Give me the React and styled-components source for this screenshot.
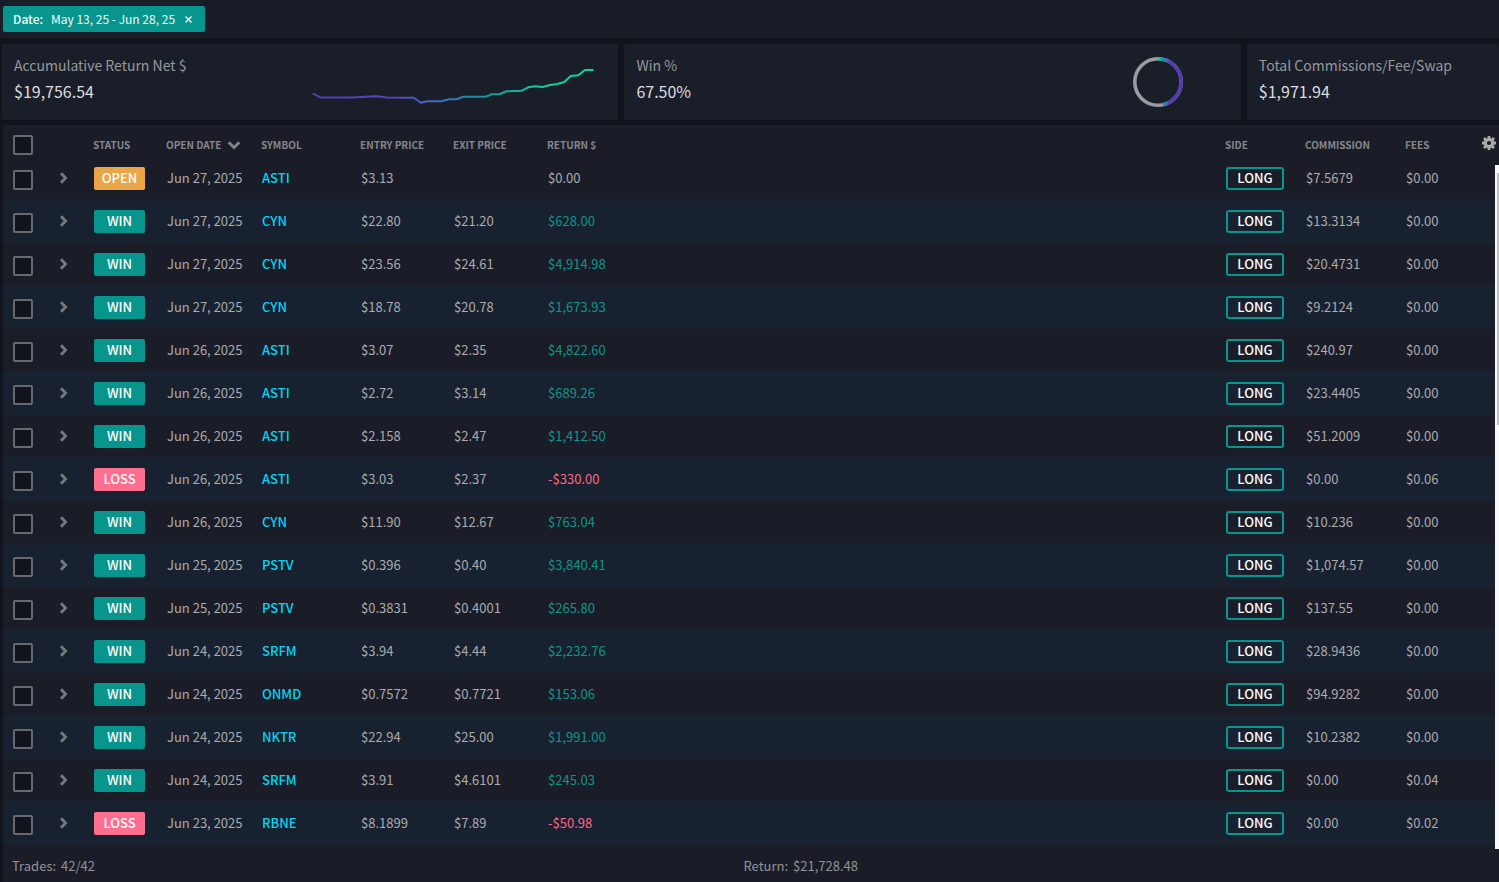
import React from "react";
import styled, { createGlobalStyle } from "styled-components";

const GlobalStyle = createGlobalStyle`
  *, *::before, *::after { box-sizing: border-box; }
  body {
    margin: 0;
    background: #11141c;
    color: #a3a4a7;
    font-family: "Noto Sans CJK SC", "Noto Sans", sans-serif;
    font-size: 13px;
    line-height: 20px;
  }
  button { font: inherit; color: inherit; background: none; border: 0; padding: 0; cursor: pointer; }
  a { text-decoration: none; }
`;

const Page = styled.div`
  display: flex;
  flex-direction: column;
  min-height: 100vh;
`;

const FilterBar = styled.div`
  display: flex;
  padding: 6px 3px;
  background: #1a1d28;
`;

const FilterChip = styled.button`
  && {
    display: flex;
    align-items: center;
    height: 26px;
    padding: 0 13px 0 10px;
    border-radius: 2px;
    background: #07958d;
    color: #f4fbfb;
    font-size: 12px;
  }
`;

const ChipLabel = styled.span`
  margin-right: 8px;
  font-weight: 500;
`;

const CloseIcon = styled.svg`
  width: 7px;
  height: 7px;
  margin-left: 10px;
`;

const Stats = styled.section`
  display: grid;
  grid-template-columns: 22fr 22fr 9fr;
  gap: 6px;
  padding: 6px 0 5px 2px;
`;

const StatCard = styled.article`
  display: flex;
  justify-content: space-between;
  min-width: 0;
  height: 76px;
  padding: 12px;
  border-radius: 2px;
  background: #1a1e29;
  overflow: hidden;
`;

const StatTitle = styled.h2`
  margin: 0 0 7px;
  font-size: 14px;
  font-weight: 400;
  line-height: 18px;
  color: #97989c;
  white-space: nowrap;
`;

const StatValue = styled.div`
  font-size: 16px;
  line-height: 20px;
  color: #dcdddf;
`;

const Spark = styled.svg`
  width: 284px;
  height: 52px;
  margin-right: 11px;
`;

const Donut = styled.svg`
  width: 52px;
  height: 52px;
  margin-right: 45px;
`;

const Panel = styled.main`
  flex: 1;
  display: flex;
  flex-direction: column;
  margin-left: 3px;
  background: #1a1d28;
`;

const TableArea = styled.div`
  display: flex;
`;

const Table = styled.table`
  flex: 1;
  width: 0;
  margin-bottom: 4px;
  table-layout: fixed;
  border-collapse: separate;
  border-spacing: 0;
`;

const Col = styled.col`
  width: ${(p) => p.$w}px;
`;

const Th = styled.th`
  height: 32px;
  padding: 10px 0 0 ${(p) => (p.$check ? 10 : 9)}px;
  font-size: 10px;
  font-weight: 700;
  line-height: 20px;
  text-align: left;
  vertical-align: top;
  white-space: nowrap;
  color: #85878c;
`;

const Tr = styled.tr`
  background: ${(p) => (p.$alt ? "#18212f" : "#1a1d28")};
`;

const Td = styled.td`
  height: 43px;
  padding: 10px 0 0 10px;
  border-bottom: 1px solid #1a2230;
  line-height: 22px;
  vertical-align: top;
  white-space: nowrap;
  color: ${(p) => p.$tone || "#aaabad"};
`;

const Check = styled.input.attrs({ type: "checkbox" })`
  appearance: none;
  display: block;
  width: 20px;
  height: 20px;
  margin: ${(p) => (p.$row ? "3px 0 0" : "0")};
  border: 2px solid #67696e;
  border-radius: 2px;
  background: #11141c;
`;

const SortButton = styled.button`
  && {
    display: flex;
    align-items: center;
    gap: 6px;
    font-weight: 700;
  }
`;

const IconButton = styled.button`
  && {
    display: flex;
    align-items: center;
    height: ${(p) => (p.$row ? 22 : 16)}px;
  }
`;

const Status = styled.span`
  display: block;
  width: 51px;
  height: 23px;
  border-radius: 2px;
  background: ${(p) => ({ OPEN: "#eaa646", WIN: "#07958d", LOSS: "#fd6f8f" })[p.$kind]};
  color: #ffffff;
  font-weight: 500;
  line-height: 22px;
  text-align: center;
`;

const Side = styled.span`
  display: block;
  width: 58px;
  height: 23px;
  border: 2px solid #07958d;
  border-radius: 3px;
  color: #ffffff;
  font-weight: 500;
  line-height: 18px;
  text-align: center;
`;

const SymbolLink = styled.a`
  color: #06d3ef;
  font-weight: 500;
`;

const ScrollTrack = styled.div`
  width: 4px;
  margin-top: 40px;
  padding: 8px 0 0 2px;
  background: #fafafa;
`;

const ScrollThumb = styled.div`
  height: 252px;
  background: #c1c1c1;
`;

const Footer = styled.footer`
  display: grid;
  grid-template-columns: 1fr 1fr;
  padding: 7px 24px 6px 9px;
  color: #929397;
`;

const Total = styled.span`
  display: flex;
  gap: 5px;
`;

const trades = [
  ["OPEN", "Jun 27, 2025", "ASTI", "$3.13", "", "$0.00", "$7.5679", "$0.00"],
  ["WIN", "Jun 27, 2025", "CYN", "$22.80", "$21.20", "$628.00", "$13.3134", "$0.00"],
  ["WIN", "Jun 27, 2025", "CYN", "$23.56", "$24.61", "$4,914.98", "$20.4731", "$0.00"],
  ["WIN", "Jun 27, 2025", "CYN", "$18.78", "$20.78", "$1,673.93", "$9.2124", "$0.00"],
  ["WIN", "Jun 26, 2025", "ASTI", "$3.07", "$2.35", "$4,822.60", "$240.97", "$0.00"],
  ["WIN", "Jun 26, 2025", "ASTI", "$2.72", "$3.14", "$689.26", "$23.4405", "$0.00"],
  ["WIN", "Jun 26, 2025", "ASTI", "$2.158", "$2.47", "$1,412.50", "$51.2009", "$0.00"],
  ["LOSS", "Jun 26, 2025", "ASTI", "$3.03", "$2.37", "-$330.00", "$0.00", "$0.06"],
  ["WIN", "Jun 26, 2025", "CYN", "$11.90", "$12.67", "$763.04", "$10.236", "$0.00"],
  ["WIN", "Jun 25, 2025", "PSTV", "$0.396", "$0.40", "$3,840.41", "$1,074.57", "$0.00"],
  ["WIN", "Jun 25, 2025", "PSTV", "$0.3831", "$0.4001", "$265.80", "$137.55", "$0.00"],
  ["WIN", "Jun 24, 2025", "SRFM", "$3.94", "$4.44", "$2,232.76", "$28.9436", "$0.00"],
  ["WIN", "Jun 24, 2025", "ONMD", "$0.7572", "$0.7721", "$153.06", "$94.9282", "$0.00"],
  ["WIN", "Jun 24, 2025", "NKTR", "$22.94", "$25.00", "$1,991.00", "$10.2382", "$0.00"],
  ["WIN", "Jun 24, 2025", "SRFM", "$3.91", "$4.6101", "$245.03", "$0.00", "$0.04"],
  ["LOSS", "Jun 23, 2025", "RBNE", "$8.1899", "$7.89", "-$50.98", "$0.00", "$0.02"],
];

const returnTone = { OPEN: "#aaabad", WIN: "#109488", LOSS: "#fb6787" };
const columns = [46, 35, 73, 95, 99, 93, 94, null, 80, 100, 77, 22];

const Chevron = ({ down }) => (
  <svg width={down ? 14 : 10} height={down ? 16 : 14} viewBox={down ? "0 0 14 16" : "0 0 10 14"} fill="none" stroke={down ? "#808287" : "#77797d"} strokeWidth="2.8">
    <path d={down ? "M1.6 5.2 7 10.6l5.4-5.4" : "M2 2.2 6.6 7 2 11.8"} />
  </svg>
);

const Gear = () => (
  <svg width="14" height="16" viewBox="0 0 16 16" fill="none" stroke="#a9aaac">
    <circle cx="8" cy="8" r="4.2" strokeWidth="3.6" />
    <path strokeWidth="3.2" d="M8 0v3M8 13v3M0 8h3M13 8h3M2.3 2.3l2.2 2.2M11.5 11.5l2.2 2.2M2.3 13.7l2.2-2.2M11.5 4.5l2.2-2.2" />
  </svg>
);

export default function App() {
  return (
    <Page>
      <GlobalStyle />
      <FilterBar>
        <FilterChip type="button">
          <ChipLabel>Date:</ChipLabel>
          May 13, 25 - Jun 28, 25
          <CloseIcon viewBox="0 0 7 7" stroke="currentColor" strokeWidth="1.4">
            <path d="M.5.5l6 6M6.5.5l-6 6" />
          </CloseIcon>
        </FilterChip>
      </FilterBar>

      <Stats>
        <StatCard>
          <div>
            <StatTitle>Accumulative Return Net $</StatTitle>
            <StatValue>$19,756.54</StatValue>
          </div>
          <Spark viewBox="0 0 284 52" fill="none" strokeWidth="2" strokeLinejoin="round">
            <defs>
              <linearGradient id="spark" gradientUnits="userSpaceOnUse" x1="0" y1="0" x2="284" y2="0">
                <stop offset="0" stopColor="#553ab4" />
                <stop offset=".3" stopColor="#5a43c4" />
                <stop offset=".42" stopColor="#4a63c8" />
                <stop offset=".6" stopColor="#158f9f" />
                <stop offset=".78" stopColor="#0dcb9c" />
                <stop offset="1" stopColor="#0bd998" />
              </linearGradient>
            </defs>
            <path
              stroke="url(#spark)"
              d="M1.7 37.3 9.7 41.5H40.7L64 40.3 69 40.5 75 41.5 103 41.8 109.7 46.7 116.3 45.3H130.7L138 43.3H145.7L152.3 40.7H174.7L180.7 38.3 189 38 195.7 35.3 210.7 34.7 217.3 31.3 224 30.3 231.7 31 239 29 246.3 28 253.3 26 259.7 20 267.3 19.3 274 14H282.5"
            />
          </Spark>
        </StatCard>
        <StatCard>
          <div>
            <StatTitle>Win %</StatTitle>
            <StatValue>67.50%</StatValue>
          </div>
          <Donut viewBox="0 0 52 52" fill="none" strokeWidth="3.6">
            <defs>
              <linearGradient id="ring" gradientUnits="userSpaceOnUse" x1="26" y1="0" x2="37" y2="0">
                <stop offset="0" stopColor="#10c9a0" />
                <stop offset=".45" stopColor="#1693a0" />
                <stop offset=".85" stopColor="#4b62c2" />
                <stop offset="1" stopColor="#553bb2" />
              </linearGradient>
            </defs>
            <circle cx="26" cy="26" r="23.2" stroke="#9b9ca0" />
            <path stroke="url(#ring)" d="M26 2.8A23.2 23.2 0 0 1 31.2 48.6" />
          </Donut>
        </StatCard>
        <StatCard>
          <div>
            <StatTitle>Total Commissions/Fee/Swap</StatTitle>
            <StatValue>$1,971.94</StatValue>
          </div>
        </StatCard>
      </Stats>

      <Panel>
        <TableArea>
          <Table>
            <colgroup>
              {columns.map((w, i) => (w ? <Col key={i} $w={w} /> : <col key={i} />))}
            </colgroup>
            <thead>
              <tr>
                <Th $check><Check aria-label="Select all trades" /></Th>
                <Th />
                <Th>STATUS</Th>
                <Th><SortButton type="button">OPEN DATE <Chevron down /></SortButton></Th>
                <Th>SYMBOL</Th>
                <Th>ENTRY PRICE</Th>
                <Th>EXIT PRICE</Th>
                <Th>RETURN $</Th>
                <Th>SIDE</Th>
                <Th>COMMISSION</Th>
                <Th>FEES</Th>
                <Th><IconButton type="button" aria-label="Table settings"><Gear /></IconButton></Th>
              </tr>
            </thead>
            <tbody>
              {trades.map(([status, date, symbol, entry, exit, ret, commission, fees], i) => (
                <Tr key={i} $alt={i % 2 === 1}>
                  <Td><Check $row aria-label={`Select ${symbol} ${date}`} /></Td>
                  <Td><IconButton $row type="button" aria-label="Expand trade"><Chevron /></IconButton></Td>
                  <Td><Status $kind={status}>{status}</Status></Td>
                  <Td>{date}</Td>
                  <Td><SymbolLink href="#">{symbol}</SymbolLink></Td>
                  <Td>{entry}</Td>
                  <Td>{exit}</Td>
                  <Td $tone={returnTone[status]}>{ret}</Td>
                  <Td><Side>LONG</Side></Td>
                  <Td>{commission}</Td>
                  <Td>{fees}</Td>
                  <Td />
                </Tr>
              ))}
            </tbody>
          </Table>
          <ScrollTrack><ScrollThumb /></ScrollTrack>
        </TableArea>
        <Footer>
          <Total><span>Trades:</span><span>42/42</span></Total>
          <Total><span>Return:</span><span>$21,728.48</span></Total>
        </Footer>
      </Panel>
    </Page>
  );
}
